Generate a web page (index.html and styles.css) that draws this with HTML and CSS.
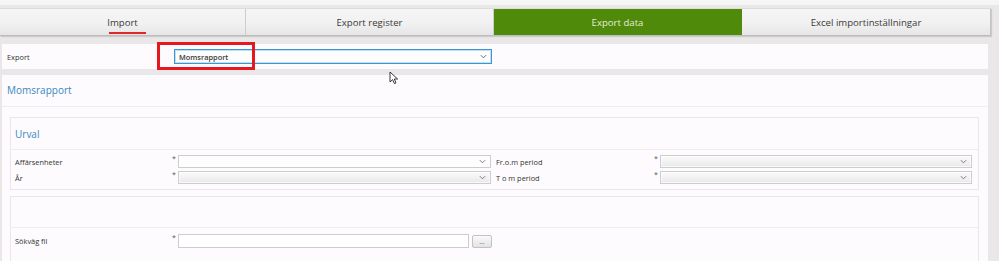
FILE: index.html
```html
<!DOCTYPE html>
<html lang="sv">
<head>
<meta charset="utf-8">
<title>Export data</title>
<link rel="stylesheet" href="styles.css">
</head>
<body>
<div class="topstrip"></div>
<div class="app">
  <nav class="tabs">
    <div class="tab"><span class="tab-label marked">Import</span></div>
    <div class="tab"><span class="tab-label">Export register</span></div>
    <div class="tab active"><span class="tab-label">Export data</span></div>
    <div class="tab"><span class="tab-label">Excel importinställningar</span></div>
  </nav>

  <div class="export-row">
    <span class="row-label">Export</span>
    <div class="select focused">
      <span class="select-value">Momsrapport</span>
      <svg class="chev" viewBox="0 0 8 5" width="7" height="5"><polyline points="1,1 4,4 7,1" fill="none" stroke="#666" stroke-width="1.1"/></svg>
    </div>
    <div class="highlight"></div>
    <svg class="cursor" viewBox="0 0 10 14" width="10" height="14"><path d="M1 1 L1 11 L3.6 8.6 L5.4 12.6 L7 11.9 L5.3 8 L8.6 8 Z" fill="#fff" stroke="#222" stroke-width="0.9" stroke-linejoin="round"/></svg>
  </div>

  <section class="panel">
    <header class="panel-head">Momsrapport</header>
    <div class="panel-body">
      <div class="box">
        <div class="box-head">Urval</div>
        <div class="form-grid">
          <span class="flabel">Affärsenheter</span>
          <span class="req">*</span>
          <div class="select plain"><svg class="chev" viewBox="0 0 8 5" width="7" height="5"><polyline points="1,1 4,4 7,1" fill="none" stroke="#777" stroke-width="1.1"/></svg></div>
          <span class="flabel second-col">Fr.o.m period</span>
          <span class="req">*</span>
          <div class="select"><svg class="chev" viewBox="0 0 8 5" width="7" height="5"><polyline points="1,1 4,4 7,1" fill="none" stroke="#777" stroke-width="1.1"/></svg></div>

          <span class="flabel">År</span>
          <span class="req">*</span>
          <div class="select"><svg class="chev" viewBox="0 0 8 5" width="7" height="5"><polyline points="1,1 4,4 7,1" fill="none" stroke="#777" stroke-width="1.1"/></svg></div>
          <span class="flabel second-col">T o m period</span>
          <span class="req">*</span>
          <div class="select"><svg class="chev" viewBox="0 0 8 5" width="7" height="5"><polyline points="1,1 4,4 7,1" fill="none" stroke="#777" stroke-width="1.1"/></svg></div>
        </div>
      </div>

      <div class="box second">
        <div class="box-head"></div>
        <div class="file-row">
          <span class="flabel">Sökväg fil</span>
          <span class="req">*</span>
          <div class="text-input"></div>
          <div class="browse">…</div>
        </div>
      </div>
    </div>
  </section>
</div>
</body>
</html>
```

FILE: styles.css
```css
* { box-sizing: border-box; }

html, body {
  margin: 0;
  padding: 0;
}

body {
  width: 999px;
  height: 261px;
  overflow: hidden;
  background: #e9e7e8;
  font-family: "Open Sans", "Noto Sans", sans-serif;
  color: #333;
}

.topstrip {
  height: 5px;
  background: #f6f5f6;
}

.app {
  padding-top: 3px;
  position: relative;
}

/* Tabs */
.tabs {
  display: flex;
  width: 991px;
  height: 28px;
  border-top: 1px solid #dcdcdc;
  border-bottom: 1px solid #bdbdbd;
  border-right: 1px solid #c4c4c4;
  box-shadow: 1px 1px 1px rgba(0,0,0,0.12);
}

.tab {
  flex: 0 0 248px;
  display: flex;
  align-items: center;
  justify-content: center;
  background: linear-gradient(#f5f5f5 0%, #f1f1f1 55%, #e6e6e6 100%);
  border-right: 1px solid #cdcdcd;
  font-size: 9.6px;
  color: #3a3a3a;
}

.tab:first-child { flex-basis: 246px; }
.tab:last-child { border-right: none; flex: 1 1 auto; }

.tab.active {
  background: #4f8a0b;
  color: #e3ecd6;
  border-right-color: #4f8a0b;
}

.tab-label { position: relative; }

.tab-label.marked::after {
  content: "";
  position: absolute;
  left: 2px;
  right: -8px;
  bottom: -5px;
  height: 2px;
  background: #e2262c;
}

/* Export row */
.export-row {
  position: relative;
  display: flex;
  align-items: center;
  margin: 8px 0 0 2px;
  width: 986px;
  height: 25px;
  padding-left: 5px;
  background: #fdfbfd;
}

.row-label {
  width: 167px;
  font-size: 7.4px;
  color: #333;
}

.select {
  position: relative;
  height: 13px;
  border: 1px solid #cdcdcd;
  background: linear-gradient(#fbfbfb, #e8e8e8);
  box-shadow: inset 0 0 0 1px rgba(255,255,255,0.7);
}

.select.plain {
  background: #fefefe;
}

.select.focused {
  width: 318px;
  height: 15px;
  border: 1px solid #3b96d2;
  box-shadow: inset 0 0 0 1px #bfe0f3;
  background: #fdfdfd;
  display: flex;
  align-items: center;
  padding-left: 4px;
}

.select-value {
  font-size: 7.4px;
  font-weight: 600;
  color: #3a3a3a;
}

.chev {
  position: absolute;
  right: 4px;
  top: 50%;
  margin-top: -2.5px;
}

.highlight {
  position: absolute;
  left: 155px;
  top: -2px;
  width: 98px;
  height: 28px;
  border: 3px solid #e5181d;
}

.cursor {
  position: absolute;
  left: 387px;
  top: 27px;
}

/* Panel */
.panel {
  margin: 6px 0 0 2px;
  width: 986px;
  height: 220px;
  background: #fdfbfd;
}

.panel-head {
  height: 32px;
  display: flex;
  align-items: center;
  padding: 0 0 2px 5px;
  font-size: 10px;
  color: #3a87bd;
  border-bottom: 1px solid #efedef;
}

.panel-body {
  padding: 10px 9px 0 8px;
}

.box {
  border: 1px solid #e9e7e9;
  background: #fdfbfd;
  padding-bottom: 5px;
}

.box.second {
  margin-top: 6px;
  padding-bottom: 20px;
}

.box-head {
  height: 32px;
  display: flex;
  align-items: center;
  padding-left: 4px;
  font-size: 10px;
  color: #3a87bd;
  border-bottom: 1px solid #eeecee;
}

.box.second .box-head { height: 31px; }

.form-grid {
  display: grid;
  grid-template-columns: 158px 5px 313px 164px 5px 312px;
  row-gap: 3px;
  padding: 5px 0 0 4px;
}

.flabel {
  display: flex;
  align-items: center;
  font-size: 7.4px;
  color: #333;
  height: 13px;
}

.flabel.second-col { padding-left: 5px; }

.req {
  font-size: 7px;
  line-height: 7px;
  color: #555;
  margin-left: -1px;
}

.file-row {
  display: grid;
  grid-template-columns: 158px 5px 291px 24px;
  align-items: start;
  padding: 6px 0 0 4px;
}

.file-row .flabel { height: 14px; }

.text-input {
  height: 14px;
  border: 1px solid #cdcdcd;
  background: #fff;
}

.browse {
  margin: 1px 0 0 3px;
  width: 20px;
  height: 13px;
  border: 1px solid #c2c2c2;
  border-radius: 2px;
  background: linear-gradient(#fafafa, #e3e3e3);
  font-size: 7px;
  line-height: 11px;
  text-align: center;
  color: #666;
}
```
